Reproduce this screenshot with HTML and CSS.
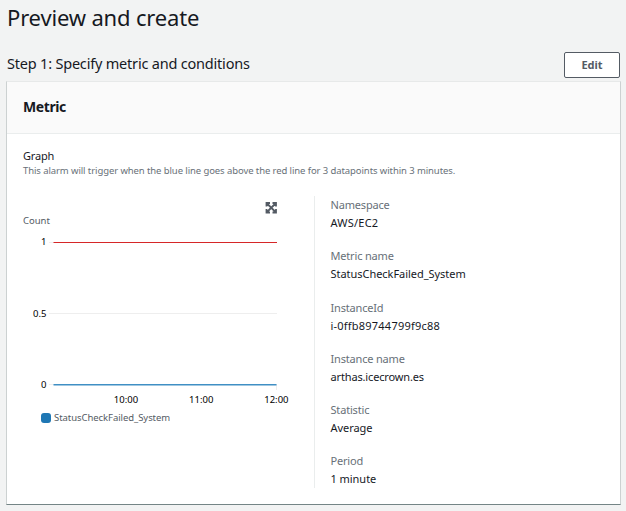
FILE: index.html
```html
<!DOCTYPE html>
<html lang="en">
<head>
<meta charset="utf-8">
<title>Preview and create</title>
<link rel="stylesheet" href="styles.css">
</head>
<body>
<main class="page">
  <h1 class="title"><span>Preview and create</span></h1>
  <header class="step">
    <h2 class="step-title">Step 1: Specify metric and conditions</h2>
    <button class="edit" type="button">Edit</button>
  </header>
  <section class="card">
    <h3 class="card-title"><span>Metric</span></h3>
    <div class="card-body">
      <div class="label"><span>Graph</span></div>
      <p class="hint"><span>This alarm will trigger when the blue line goes above the red line for 3 datapoints within 3 minutes.</span></p>
      <div class="columns">
        <svg class="chart" width="291" height="292" viewBox="0 0 291 292">
          <g class="expand">
            <path d="M243.500 10.500V7H247M249.500 7h3.500v3.500M253 13v3.500h-3.500M247 16.500h-3.500V13M243.500 7l9.500 9.500M253 7l-9.500 9.500"/>
          </g>
          <text class="muted" x="0" y="28">Count</text>
          <path class="grid" d="M26 46.5h228M26 117.5h228M26 188.5h228M253.5 189v5"/>
          <path class="threshold" d="M30.500 46.500h223.500"/>
          <path class="series" d="M30.500 188.750h223"/>
          <g class="axis">
            <text x="23.5" y="49" text-anchor="end">1</text>
            <text x="23.5" y="121" text-anchor="end">0.5</text>
            <text x="23.5" y="192" text-anchor="end">0</text>
            <text x="103" y="207" text-anchor="middle">10:00</text>
            <text x="178.200" y="207" text-anchor="middle">11:00</text>
            <text x="253.400" y="207" text-anchor="middle">12:00</text>
          </g>
          <rect class="swatch" x="18" y="217" width="10" height="10" rx="3"/>
          <text class="muted legend" x="31" y="225">StatusCheckFailed_System</text>
        </svg>
        <dl class="details">
          <div><dt>Namespace</dt><dd class="wide">AWS/EC2</dd></div>
          <div><dt>Metric name</dt><dd>StatusCheckFailed_System</dd></div>
          <div><dt>InstanceId</dt><dd class="wide">i-0ffb89744799f9c88</dd></div>
          <div><dt>Instance name</dt><dd class="narrow">arthas.icecrown.es</dd></div>
          <div><dt>Statistic</dt><dd>Average</dd></div>
          <div><dt>Period</dt><dd>1 minute</dd></div>
        </dl>
      </div>
    </div>
  </section>
</main>
</body>
</html>
```
FILE: styles.css
```css
* { box-sizing: border-box; margin: 0; padding: 0; }
body {
  background: #f2f3f3;
  color: #16191f;
  font-family: "Noto Sans", sans-serif;
  font-size: 11px;
  overflow: hidden;
}
.page { padding: 0 5px 0 6px; }
.title {
  height: 52px;
  padding: 2px 0 0 1px;
  font-size: 22px;
  font-weight: 400;
  letter-spacing: -0.17px;
  line-height: 30px;
}
.step {
  display: flex;
  justify-content: space-between;
  height: 29px;
  padding-left: 1px;
}
.step-title {
  font-size: 14.5px;
  font-weight: 400;
  letter-spacing: -0.2px;
  line-height: 22px;
  white-space: nowrap;
}
.edit {
  width: 56px;
  height: 26px;
  margin-right: 1px;
  border: 1px solid #545b64;
  border-radius: 2px;
  background: #fff;
  color: #545b64;
  font: bold 11px/24px "Noto Sans", sans-serif;
}
.card {
  height: 424px;
  background: #fff;
  border: 1px solid #ccd1d1;
  border-top-color: #e7e9e9;
  border-bottom-color: #748586;
}
.card-title {
  height: 52px;
  padding-left: 16px;
  background: #fafafa;
  border-bottom: 1px solid #eaeded;
  font-size: 14px;
  font-weight: 700;
  letter-spacing: -0.4px;
  line-height: 50px;
}
.card-body { padding: 15px 16px 0; }
.label { height: 15px; line-height: 13px; letter-spacing: -0.2px; }
.hint {
  color: #687078;
  font-size: 9.5px;
  letter-spacing: -0.09px;
  line-height: 14px;
  white-space: nowrap;
}
.columns { display: flex; margin-top: 18px; }
.chart { display: block; flex: none; font-size: 9.5px; }
.expand { fill: none; stroke: #545b64; stroke-width: 1.8; }
.muted { fill: #545b64; }
.legend { letter-spacing: -0.06px; }
.axis { fill: #000; }
.grid { fill: none; stroke: #eee; }
.threshold { stroke: #d62728; }
.series { stroke: #408fc4; stroke-width: 1.5; }
.swatch { fill: #1f77b4; }
.details {
  height: 292px;
  border-left: 1px solid #eaeded;
  padding-left: 15.5px;
  letter-spacing: -0.04px;
  line-height: 18px;
}
.details div { height: 51.25px; }
.details dt { color: #687078; letter-spacing: -0.18px; }
.details .wide { letter-spacing: 0.22px; }
.details .narrow { letter-spacing: -0.15px; }
```
